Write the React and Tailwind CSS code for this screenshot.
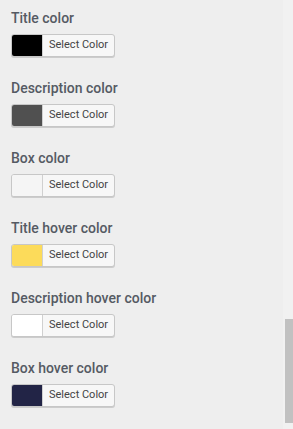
export default function App() {
  const items = [
    ["Title color", "#000000"],
    ["Description color", "#505050"],
    ["Box color", "#f5f5f5"],
    ["Title hover color", "#fcdb5a"],
    ["Description hover color", "#ffffff"],
    ["Box hover color", "#222446"],
  ];
  return (
    <div className="relative w-[293px] h-[429px] overflow-hidden bg-[#eeeeee] font-['Roboto',sans-serif]">
      <div className="flex flex-col pl-[11px] pt-[8px]">
        {items.map(([label, color]) => (
          <div key={label} className="flex flex-col h-[70px]">
            <div className="text-[14px] leading-[20px] font-medium text-[#555a63]">{label}</div>
            <div className="mt-[6px] flex h-[23px] w-[104px] rounded-[3px] border border-[#c7c7c7] bg-[#f7f7f7] shadow-[0_1px_0_#cccccc] overflow-hidden">
              <div className="w-[31px] h-full border-r border-[#d0d0d0]" style={{ backgroundColor: color }} />
              <div className="flex-1 flex items-center pl-[6px] text-[11px] text-[#444]">Select Color</div>
            </div>
          </div>
        ))}
      </div>
      <div className="absolute right-0 top-0 w-[10px] h-full bg-[#f1f1f1]">
        <div className="absolute right-0 top-[319px] w-[8px] h-[104px] bg-[#c1c1c1]" />
      </div>
    </div>
  );
}
